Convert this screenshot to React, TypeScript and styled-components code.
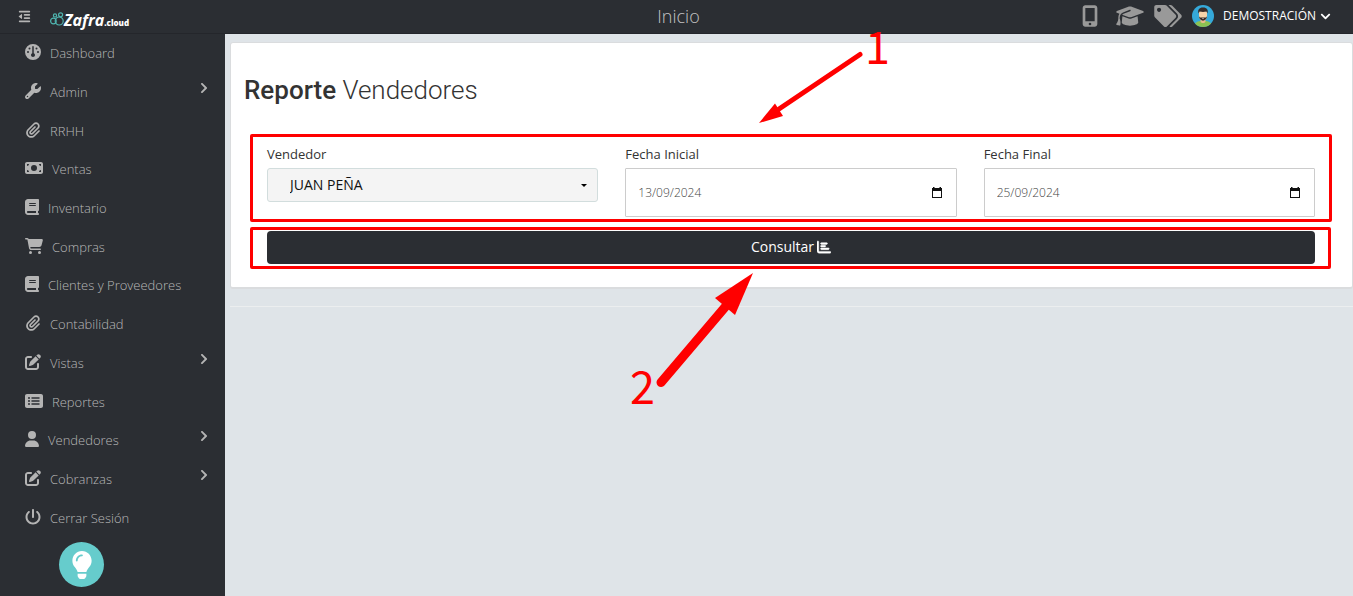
import React from "react";
import styled, { createGlobalStyle } from "styled-components";
import type { IconType } from "react-icons";
import { FaChevronDown, FaChevronRight, FaLightbulb, FaTags } from "react-icons/fa";
import {
  FaBook,
  FaCartShopping,
  FaChartBar,
  FaGauge,
  FaGraduationCap,
  FaMobileScreenButton,
  FaMoneyBill,
  FaOutdent,
  FaPaperclip,
  FaPenToSquare,
  FaPowerOff,
  FaRectangleList,
  FaUser,
  FaWrench,
} from "react-icons/fa6";

const dark = "#2b2e33";
const sans = `"Open Sans", "Noto Sans", sans-serif`;

const GlobalStyle = createGlobalStyle`
  *, *::before, *::after { box-sizing: border-box; }
  body { margin: 0; background: #dfe4e8; font-family: ${sans}; font-size: 13px; color: #333; }
  button, input, select { font-family: inherit; }
`;

const Shell = styled.div`
  display: grid;
  grid-template-columns: 225px minmax(0, 1fr);
  grid-template-rows: 34px 1fr;
  min-height: 100vh;
`;

const TopBar = styled.header`
  grid-column: 1 / -1;
  display: grid;
  grid-template-columns: 1fr auto 1fr;
  align-items: center;
  padding: 0 22px 2px 18px;
  border-bottom: 1px solid #24262b;
  background: ${dark};
`;

const Brand = styled.div`
  display: flex;
  align-items: center;
  gap: 19px;
`;

const IconButton = styled.button`
  display: flex;
  padding: 0;
  border: 0;
  background: none;
  color: #b4b4b4;
  font-size: 13px;
  cursor: pointer;
`;

const ToolButton = styled(IconButton)<{ $width: number }>`
  color: #999;
  font-size: 22px;
  & > svg { width: ${(p) => p.$width}px; }
`;

const Logo = styled.a`
  display: flex;
  align-items: baseline;
  padding-top: 11px;
  color: #fff;
  font-weight: 700;
  font-style: italic;
  font-size: 16px;
  line-height: 18px;
  text-decoration: none;
`;

const LogoSuffix = styled.span`
  font-size: 8px;
  font-weight: 800;
  font-style: normal;
`;

const PageName = styled.span`
  padding-left: 8px;
  color: #c4c4c4;
  font-size: 18px;
  font-weight: 300;
  line-height: 24px;
`;

const Tools = styled.div`
  display: flex;
  justify-content: flex-end;
  align-items: center;
  gap: 10px;
`;

const ToolIcons = styled.div`
  display: flex;
  gap: 10px;
  & > :first-child { margin-right: 8px; }
`;

const Account = styled.button`
  display: flex;
  align-items: center;
  gap: 4px;
  padding: 0;
  border: 0;
  background: none;
  color: #fff;
  font-size: 12px;
  line-height: 20px;
  cursor: pointer;
  & > :first-child { margin-right: 5px; }
`;

const Sidebar = styled.nav`
  background: ${dark};
  border-bottom: 2px solid #24262b;
`;

const Menu = styled.ul`
  display: grid;
  grid-template-rows: repeat(13, 1fr);
  height: 503px;
  margin: 0;
  padding: 0;
  list-style: none;
`;

const MenuLink = styled.a<{ $iconWidth: number }>`
  display: flex;
  align-items: center;
  gap: 9px;
  height: 100%;
  padding: 0 15px 0 25px;
  color: #b8b8b8;
  font-weight: 300;
  line-height: 20px;
  text-decoration: none;
  & > svg { width: ${(p) => p.$iconWidth}px; height: 16px; color: #b4b4b4; margin-bottom: 2px; flex: none; }
  & > svg:last-child { width: 12px; height: 12px; margin: 0 0 8px auto; }
`;

const HelpButton = styled.button`
  display: flex;
  align-items: center;
  justify-content: center;
  width: 45px;
  height: 45px;
  margin: 5px 0 9px 59px;
  padding: 0;
  border: 0;
  border-radius: 50%;
  background: #66cccc;
  color: #fff;
  font-size: 28px;
`;

const Content = styled.main`
  position: relative;
  min-width: 0;
  padding: 8px 0 0 5px;
`;

const Card = styled.section`
  padding: 28px 37px 23px 36px;
  border: 1px solid #dadcde;
  border-bottom-width: 2px;
  border-radius: 3px;
  background: #fff;
`;

const Title = styled.h1`
  margin: 0 0 35px -23px;
  color: #333;
  font-family: Roboto, sans-serif;
  font-size: 26px;
  font-weight: 300;
  line-height: 38px;
  & > b { font-weight: 500; }
`;

const Highlight = styled.div`
  position: relative;
  &::after {
    content: "";
    position: absolute;
    inset: ${(p: { $inset: string }) => p.$inset};
    border: 3px solid #f00;
    border-radius: 2px;
    pointer-events: none;
  }
`;

const Fields = styled.div`
  display: grid;
  grid-template-columns: repeat(3, minmax(0, 1fr));
  gap: 27px;
  margin-bottom: 14px;
`;

const Field = styled.div`
  display: flex;
  flex-direction: column;
  gap: 4px;
`;

const Label = styled.label`
  line-height: 20px;
`;

const SelectBox = styled.div`
  display: grid;
  align-items: center;
  & > * { grid-area: 1 / 1; }
  & > svg { justify-self: end; margin-right: 11px; pointer-events: none; }
`;

const Select = styled.select`
  appearance: none;
  width: 100%;
  height: 34px;
  padding: 0 22px 2px;
  border: 1px solid #d2dddd;
  border-radius: 3px;
  background: #f4f4f4;
  color: #111;
  font-size: 14px;
`;

const DateBox = styled.div`
  display: flex;
  align-items: center;
  height: 49px;
  padding: 0 14px 0 12px;
  border: 1px solid #ccc;
  border-radius: 1px;
`;

const DateInput = styled.input`
  flex: 1;
  min-width: 0;
  padding: 0;
  border: 0;
  outline: 0;
  color: #444;
  font-size: 12px;
  font-weight: 300;
  line-height: 20px;
`;

const Submit = styled.button`
  display: flex;
  align-items: center;
  justify-content: center;
  gap: 3px;
  width: 100%;
  height: 33px;
  padding: 0 0 2px;
  border: 0;
  border-radius: 4px;
  background: ${dark};
  color: #fff;
  font-size: 14px;
  cursor: pointer;
  & > svg { stroke: currentColor; stroke-width: 16px; }
`;

const Divider = styled.hr`
  margin: 17px 0 0;
  border: 0;
  border-top: 1px solid #eceeef;
`;

const Callouts = styled.svg`
  position: absolute;
  top: -34px;
  left: -225px;
  overflow: visible;
  pointer-events: none;
  fill: #f00;
  stroke: none;
  font-family: "Noto Sans CJK SC", sans-serif;
  font-size: 45px;
`;

type Entry = { label: string; icon: IconType; iconWidth?: number; nested?: boolean };

const entries: Entry[] = [
  { label: "Dashboard", icon: FaGauge },
  { label: "Admin", icon: FaWrench, nested: true },
  { label: "RRHH", icon: FaPaperclip },
  { label: "Ventas", icon: FaMoneyBill, iconWidth: 18 },
  { label: "Inventario", icon: FaBook, iconWidth: 14 },
  { label: "Compras", icon: FaCartShopping, iconWidth: 18 },
  { label: "Clientes y Proveedores", icon: FaBook, iconWidth: 14 },
  { label: "Contabilidad", icon: FaPaperclip },
  { label: "Vistas", icon: FaPenToSquare, nested: true },
  { label: "Reportes", icon: FaRectangleList, iconWidth: 18 },
  { label: "Vendedores", icon: FaUser, iconWidth: 14, nested: true },
  { label: "Cobranzas", icon: FaPenToSquare, nested: true },
  { label: "Cerrar Sesión", icon: FaPowerOff },
];

const LogoMark = () => (
  <svg width="14" height="14" viewBox="0 0 14 14" fill="none" stroke="#4fb5b0" strokeWidth="1.2" aria-hidden="true">
    <circle cx="3.4" cy="9" r="2.8" />
    <circle cx="9.2" cy="9" r="4" />
    <circle cx="5" cy="3.4" r="1.6" />
    <circle cx="10.6" cy="2.8" r="2" />
  </svg>
);

const Avatar = () => (
  <svg width="22" height="22" viewBox="0 0 44 44" aria-hidden="true">
    <defs>
      <clipPath id="face">
        <circle cx="22" cy="22" r="22" />
      </clipPath>
    </defs>
    <g clipPath="url(#face)">
      <path fill="#35a9da" d="M0 0h44v44H0z" />
      <path fill="#8cc152" d="M4 44c0-8 6-11 12-12h12c6 1 12 4 12 12z" />
      <path fill="#e9b98c" d="M17 27h10v6c-2 4-8 4-10 0z" />
      <path fill="#f7d3a9" d="M14 15c0-6 16-6 16 0v7c0 12-16 12-16 0z" />
      <path fill="#3a2c28" d="M13 17c-2-7 1-12 9-12s11 5 9 12l-2-4c-5 1-9 1-14 0zM14 23c3 3 4 2 8 2s5 1 8-2c-1 11-15 11-16 0z" />
      <path fill="#fff" d="M20 26h4c-1 2-3 2-4 0z" />
    </g>
  </svg>
);

const CalendarIcon = () => (
  <svg width="10" height="11" viewBox="0 0 10 11" aria-hidden="true">
    <path fill="#111" fillRule="evenodd" d="M1 0h1.500v1h5V0H9v1h1v10H0V1h1zM1 4v6h8V4z" />
  </svg>
);

const DateField = ({ id, label, value }: { id: string; label: string; value: string }) => (
  <Field>
    <Label htmlFor={id}>{label}</Label>
    <DateBox>
      <DateInput id={id} type="text" defaultValue={value} />
      <IconButton type="button" aria-label={`Abrir calendario: ${label}`}>
        <CalendarIcon />
      </IconButton>
    </DateBox>
  </Field>
);

export default function App() {
  return (
    <>
      <GlobalStyle />
      <Shell>
        <TopBar>
          <Brand>
            <IconButton type="button" aria-label="Contraer menú">
              <FaOutdent />
            </IconButton>
            <Logo href="#">
              <LogoMark />
              Zafra<LogoSuffix>.cloud</LogoSuffix>
            </Logo>
          </Brand>
          <PageName>Inicio</PageName>
          <Tools>
            <ToolIcons>
              <ToolButton $width={16} type="button" aria-label="Aplicación móvil">
                <FaMobileScreenButton />
              </ToolButton>
              <ToolButton $width={28} type="button" aria-label="Capacitación">
                <FaGraduationCap />
              </ToolButton>
              <ToolButton $width={28} type="button" aria-label="Etiquetas">
                <FaTags />
              </ToolButton>
            </ToolIcons>
            <Account type="button">
              <Avatar />
              DEMOSTRACIÓN
              <FaChevronDown size={11} />
            </Account>
          </Tools>
        </TopBar>

        <Sidebar>
          <Menu>
            {entries.map(({ label, icon: Icon, iconWidth = 16, nested }) => (
              <li key={label}>
                <MenuLink href="#" $iconWidth={iconWidth}>
                  <Icon />
                  <span>{label}</span>
                  {nested && <FaChevronRight />}
                </MenuLink>
              </li>
            ))}
          </Menu>
          <HelpButton type="button" aria-label="Ayuda">
            <FaLightbulb />
          </HelpButton>
        </Sidebar>

        <Content>
          <Card>
            <Title>
              <b>Reporte</b> Vendedores
            </Title>
            <Highlight $inset="-10px -17px -5px">
              <Fields>
                <Field>
                  <Label htmlFor="vendedor">Vendedor</Label>
                  <SelectBox>
                    <Select id="vendedor">
                      <option>JUAN PEÑA</option>
                    </Select>
                    <svg width="6" height="3" viewBox="0 0 6 3" aria-hidden="true">
                      <path d="M0 0h6L3 3z" />
                    </svg>
                  </SelectBox>
                </Field>
                <DateField id="inicio" label="Fecha Inicial" value="13/09/2024" />
                <DateField id="final" label="Fecha Final" value="25/09/2024" />
              </Fields>
            </Highlight>
            <Highlight $inset="-4px -16px -5px -17px">
              <Submit type="button">
                Consultar <FaChartBar />
              </Submit>
            </Highlight>
          </Card>
          <Divider />
          <Callouts width="900" height="420" viewBox="0 0 900 420">
            <path d="M860 54.500L779 109" stroke="#f00" strokeWidth="5" strokeLinecap="round" />
            <path d="M759 123l16-19.500 8 12.500z" />
            <text x="865" y="64">1</text>
            <path d="M661 382.500L726 306" stroke="#f00" strokeWidth="9" strokeLinecap="round" />
            <path d="M753 273l-38 25 20 17z" />
            <text x="630" y="404">2</text>
          </Callouts>
        </Content>
      </Shell>
    </>
  );
}
